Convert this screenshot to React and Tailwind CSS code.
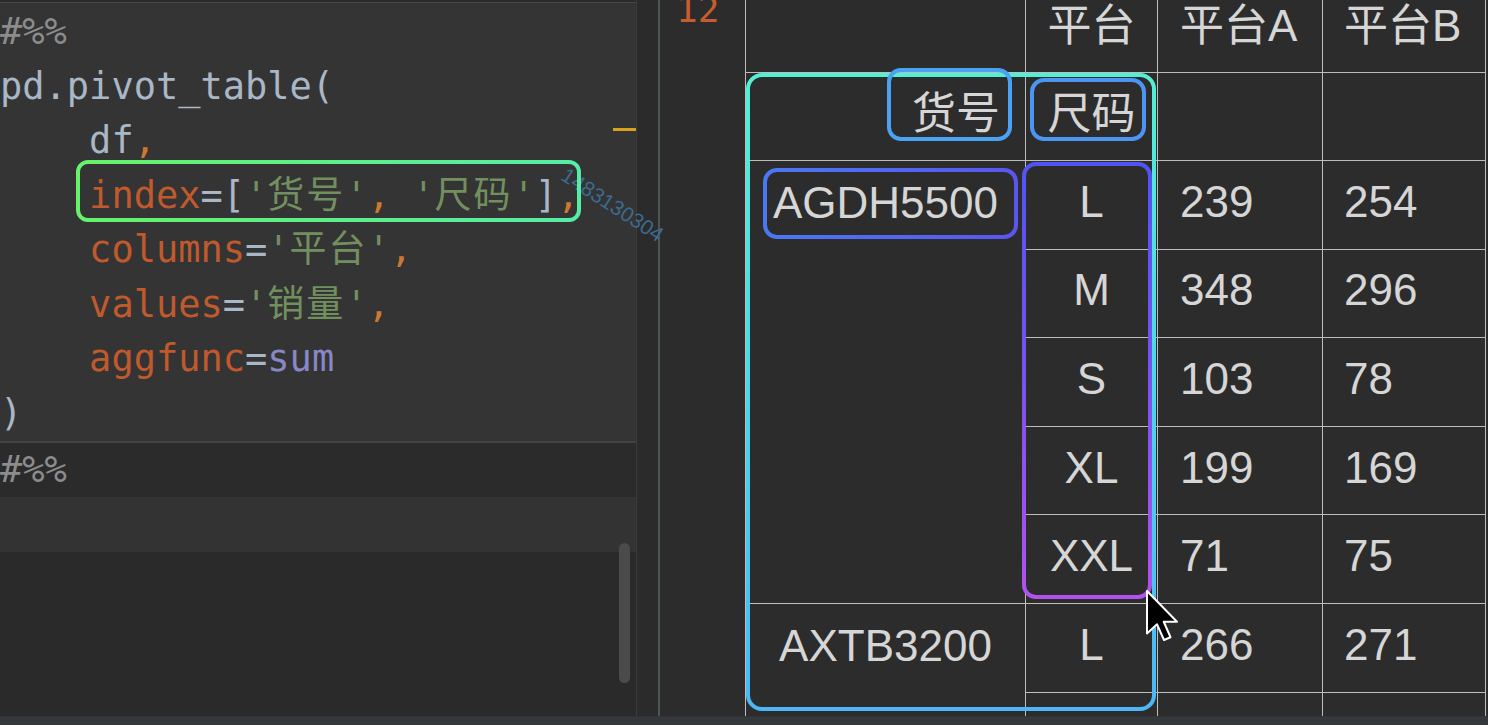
import React from "react";

const codeFont = "font-['DejaVu_Sans_Mono','Noto_Sans_CJK_SC',monospace]";
const tableFont = "font-['Liberation_Sans','Noto_Sans_CJK_SC',sans-serif]";

const P = ({ children }) => <span className="text-[#a9b7c6]">{children}</span>;
const K = ({ children }) => <span className="text-[#c05a2d]">{children}</span>;
const C = ({ children }) => <span className="text-[#cc7832]">{children}</span>;
const S = ({ children }) => <span className="text-[#72905f]">{children}</span>;
const Z = ({ children }) => <span className="tracking-[2px]">{children}</span>;

function CodeLine({ children }) {
  return <div className="h-[54.5px] leading-[54.5px] whitespace-pre">{children}</div>;
}

const cell = "p-0 pb-[6px] border border-[#bdbdbd] align-middle";
const head = "p-0 pb-[5px] border border-[#bdbdbd] align-middle leading-[44px]";

const rows = [
  ["L", "239", "254"],
  ["M", "348", "296"],
  ["S", "103", "78"],
  ["XL", "199", "169"],
  ["XXL", "71", "75"],
];

export default function App() {
  return (
    <div className="relative w-[1488px] h-[725px] overflow-hidden bg-[#2b2b2b] flex flex-col">
      <div className="flex h-[716px]">
        {/* Left code panel */}
        <div className={`relative w-[636px] flex flex-col bg-[#2b2b2b] ${codeFont} text-[37px]`}>
          <div className="h-[3px] bg-[#2b2b2b] border-b border-[#484848]" />
          <div className="h-[438px] bg-[#343434] pt-[2px]">
            <CodeLine><span className="text-[#8c8c8c]">#%%</span></CodeLine>
            <CodeLine><P>pd.pivot_table(</P></CodeLine>
            <CodeLine><P>{"    df"}</P><C>,</C></CodeLine>
            <CodeLine>
              <P>{"    "}</P><K>index</K><P>=[</P><S>'<Z>货号</Z>'</S><C>, </C><S>'<Z>尺码</Z>'</S><P>]</P><C>,</C>
            </CodeLine>
            <CodeLine>
              <P>{"    "}</P><K>columns</K><P>=</P><S>'<Z>平台</Z>'</S><C>,</C>
            </CodeLine>
            <CodeLine>
              <P>{"    "}</P><K>values</K><P>=</P><S>'<Z>销量</Z>'</S><C>,</C>
            </CodeLine>
            <CodeLine>
              <P>{"    "}</P><K>aggfunc</K><P>=</P><span className="text-[#8888c6]">sum</span>
            </CodeLine>
            <CodeLine><P>)</P></CodeLine>
          </div>
          <div className="h-[2px] bg-[#424242]" />
          <div className="h-[54px] leading-[54px] bg-[#2b2b2b] text-[#8c8c8c]">#%%</div>
          <div className="h-[55px] bg-[#333333]" />
          <div className="flex-1 bg-[#2a2a2a]" />
          {/* error stripe marker */}
          <div className="absolute left-[613px] top-[128px] w-[23px] h-[3px] bg-[#d8a31a]" />
          {/* scrollbar */}
          <div className="absolute left-[619px] top-[543px] w-[11px] h-[140px] rounded-full bg-[#4b4b4b]" />
        </div>
        <div className="w-px bg-[#3b3b3b]" />
        <div className="w-[21px] bg-[#2b2b2b]" />
        <div className="w-[2px] bg-[#4a5753]" />
        {/* Right output panel */}
        <div className="flex-1 flex overflow-hidden bg-[#2c2c2c]">
          <div className={`w-[85px] shrink-0 pl-[16px] -mt-[8px] ${codeFont} text-[36px] leading-[36px] text-[#c65d2e]`}>12</div>
          <div className="-mt-[17px] shrink-0">
            <table className={`table-fixed border-collapse w-[740px] ${tableFont} text-[44px] text-[#d6d6d6]`}>
              <colgroup>
                <col className="w-[280px]" />
                <col className="w-[132px]" />
                <col className="w-[165px]" />
                <col className="w-[163px]" />
              </colgroup>
              <tbody>
                <tr className="h-[89px]">
                  <td className={head}></td>
                  <td className={`${head} text-center`}>平台</td>
                  <td className={`${head} text-left pl-[22px]`}>平台A</td>
                  <td className={`${head} text-left pl-[21px]`}>平台B</td>
                </tr>
                <tr className="h-[88px]">
                  <td className={`${cell} text-right pr-[25px]`}>货号</td>
                  <td className={`${cell} text-center`}>尺码</td>
                  <td className={cell}></td>
                  <td className={cell}></td>
                </tr>
                {rows.map((r, i) => (
                  <tr key={r[0]} className="h-[88.6px]">
                    {i === 0 && (
                      <td rowSpan={5} className="p-0 border border-[#bdbdbd] align-top text-center leading-[83px]">
                        AGDH5500
                      </td>
                    )}
                    <td className={`${cell} text-center`}>{r[0]}</td>
                    <td className={`${cell} text-left pl-[22px]`}>{r[1]}</td>
                    <td className={`${cell} text-left pl-[21px]`}>{r[2]}</td>
                  </tr>
                ))}
                <tr className="h-[88.6px]">
                  <td rowSpan={2} className="p-0 border border-[#bdbdbd] align-top text-center leading-[83px]">
                    AXTB3200
                  </td>
                  <td className={`${cell} text-center`}>L</td>
                  <td className={`${cell} text-left pl-[22px]`}>266</td>
                  <td className={`${cell} text-left pl-[21px]`}>271</td>
                </tr>
                <tr className="h-[88.6px]">
                  <td className={`${cell} text-center`}>M</td>
                  <td className={`${cell} text-left pl-[22px]`}>290</td>
                  <td className={`${cell} text-left pl-[21px]`}>279</td>
                </tr>
              </tbody>
            </table>
          </div>
        </div>
      </div>
      <div className="h-[9px] bg-[#35383a] border-t border-[#2f3436]" />

      {/* watermark */}
      <div className="absolute left-[554px] top-[193px] rotate-[33deg] font-['Liberation_Sans',sans-serif] text-[21px] leading-[24px] text-[#3d6a90] pointer-events-none">
        1483130304
      </div>

      {/* annotation overlays */}
      <svg className="absolute inset-0 pointer-events-none" width="1488" height="725" viewBox="0 0 1488 725">
        <defs>
          <linearGradient id="gGreen" x1="0" y1="0" x2="1" y2="0">
            <stop offset="0" stopColor="#66f26a" />
            <stop offset="1" stopColor="#55eda6" />
          </linearGradient>
          <linearGradient id="gTeal" x1="0" y1="0" x2="0" y2="1">
            <stop offset="0" stopColor="#52f0d4" />
            <stop offset="0.5" stopColor="#4bd6e8" />
            <stop offset="1" stopColor="#4cb6f6" />
          </linearGradient>
          <linearGradient id="gIndigo" x1="0" y1="0" x2="1" y2="0">
            <stop offset="0" stopColor="#4a78f5" />
            <stop offset="1" stopColor="#5a56f0" />
          </linearGradient>
          <linearGradient id="gPurple" x1="0" y1="0" x2="0" y2="1">
            <stop offset="0" stopColor="#5054f5" />
            <stop offset="0.5" stopColor="#7a52f2" />
            <stop offset="1" stopColor="#b152ee" />
          </linearGradient>
        </defs>
        <rect x="78" y="162" width="501" height="58" rx="10" fill="none" stroke="url(#gGreen)" strokeWidth="4" />
        <rect x="748" y="75" width="406" height="634" rx="14" fill="none" stroke="url(#gTeal)" strokeWidth="4" />
        <rect x="889" y="70" width="121" height="69" rx="12" fill="none" stroke="#4aa2f2" strokeWidth="4" />
        <rect x="1032" y="80" width="112" height="59" rx="12" fill="none" stroke="#4b96f2" strokeWidth="4" />
        <rect x="765" y="170" width="251" height="67" rx="12" fill="none" stroke="url(#gIndigo)" strokeWidth="4" />
        <rect x="1024" y="164" width="126" height="433" rx="12" fill="none" stroke="url(#gPurple)" strokeWidth="4" />
        {/* mouse cursor */}
        <g transform="translate(1147 591) scale(2.5)">
          <path
            d="M0 0 L0 17 L4 13.3 L6.8 19.6 L9.4 18.5 L6.7 12.3 L12 12.3 Z"
            fill="#000"
            stroke="#fff"
            strokeWidth="0.8"
            strokeLinejoin="round"
          />
        </g>
      </svg>
    </div>
  );
}
